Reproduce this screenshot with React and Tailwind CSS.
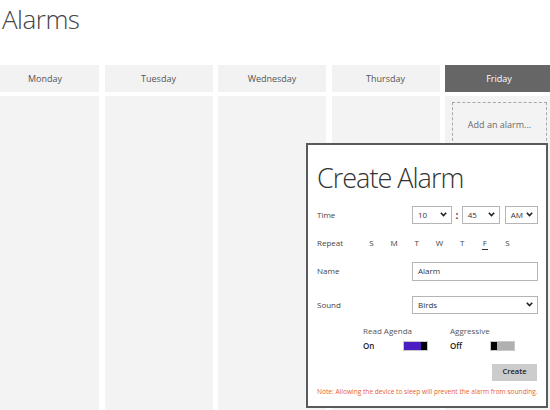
import React from 'react';

const days = ['Monday', 'Tuesday', 'Wednesday', 'Thursday', 'Friday'];
const repeatDays = ['S', 'M', 'T', 'W', 'T', 'F', 'S'];

const Chevron = () => (
  <svg width="7" height="5" viewBox="0 0 7 5" className="shrink-0">
    <polyline points="0.8,0.8 3.5,3.6 6.2,0.8" fill="none" stroke="#222" strokeWidth="1.6" />
  </svg>
);

const Select = ({ value, className }) => (
  <div className={`flex items-center justify-between h-[18px] border border-[#b5b5b5] bg-white pl-[5px] pr-[4px] text-[8px] text-[#333] ${className}`}>
    <span>{value}</span>
    <Chevron />
  </div>
);

const Toggle = ({ on }) => (
  <div className="flex h-[10px] w-[25px] border border-[#c8c8c8]">
    {on ? (
      <>
        <div className="flex-1 bg-[#4a1ec0]" />
        <div className="w-[6px] bg-black" />
      </>
    ) : (
      <>
        <div className="w-[6px] bg-black" />
        <div className="flex-1 bg-[#b0b0b0]" />
      </>
    )}
  </div>
);

const DayColumn = ({ day, active }) => (
  <div className="flex flex-col w-[108px] shrink-0 gap-[4px]">
    <div
      className={`h-[27px] flex items-center justify-center text-[9px] font-medium ${
        active ? 'bg-[#666666] text-white' : 'bg-[#f2f2f2] text-[#555]'
      }`}
    >
      {day}
    </div>
    <div className="flex-1 bg-[#f3f3f3] pl-[7px] pr-[6px] pt-[6px]">
      {active && (
        <div className="h-[80px] border border-dashed border-[#a8a8a8] flex justify-center pt-[15px] text-[9px] text-[#6a6a6a]">
          Add an alarm...
        </div>
      )}
    </div>
  </div>
);

const CreateAlarm = () => (
  <div className="absolute left-[306px] top-[143px] w-[242px] h-[265px] border-2 border-[#5a5a5a] bg-white pl-[9px] pr-[8px] text-[#444]">
    <div className="mt-[13px] text-[27px] leading-normal font-light tracking-[-1px] text-[#333]">Create Alarm</div>

    <div className="mt-[7px] flex items-center h-[18px]">
      <div className="w-[95px] shrink-0 text-[8px]">Time</div>
      <Select value="10" className="w-[41px]" />
      <span className="w-[10px] text-center text-[10px] font-bold leading-none">:</span>
      <Select value="45" className="w-[39px]" />
      <Select value="AM" className="w-[34px] ml-[5px]" />
    </div>

    <div className="mt-[10px] flex items-center h-[18px]">
      <div className="w-[43px] shrink-0 text-[8px]">Repeat</div>
      <div className="flex">
        {repeatDays.map((d, i) => (
          <div key={i} className="w-[22.7px] flex flex-col items-center text-[8px] relative">
            {d}
            {i === 5 && <div className="absolute top-[12px] w-[6px] h-px bg-[#333]" />}
          </div>
        ))}
      </div>
    </div>

    <div className="mt-[10px] flex items-center h-[19px]">
      <div className="w-[95px] shrink-0 text-[8px]">Name</div>
      <div className="w-[127px] h-[19px] border border-[#b5b5b5] flex items-center pl-[5px] text-[8px] text-[#333]">
        Alarm
      </div>
    </div>

    <div className="mt-[15px] flex items-center h-[18px]">
      <div className="w-[95px] shrink-0 text-[8px]">Sound</div>
      <Select value="Birds" className="w-[127px]" />
    </div>

    <div className="mt-[12px] flex pl-[46px] text-[8px]">
      <div className="w-[87px]">
        <div className="h-[10px] leading-[10px] text-[#555]">Read Agenda</div>
        <div className="mt-[5px] flex items-center h-[10px]">
          <span className="w-[40px] font-semibold text-[#222]">On</span>
          <Toggle on />
        </div>
      </div>
      <div>
        <div className="h-[10px] leading-[10px] text-[#555]">Aggressive</div>
        <div className="mt-[5px] flex items-center h-[10px]">
          <span className="w-[40px] font-semibold text-[#222]">Off</span>
          <Toggle />
        </div>
      </div>
    </div>

    <div className="mt-[13px] flex justify-end pr-[1px]">
      <div className="w-[45px] h-[17px] bg-[#cccccc] flex items-center justify-center text-[7.5px] font-semibold text-[#222]">
        Create
      </div>
    </div>

    <div className="mt-[6px] text-[6.6px] text-[#e9602f] whitespace-nowrap">
      Note: Allowing the device to sleep will prevent the alarm from sounding.
    </div>
  </div>
);

export default function App() {
  return (
    <div className="relative w-[550px] h-[410px] overflow-hidden bg-white font-['Open_Sans',sans-serif]">
      <div className="h-[65px] pl-[2px]">
        <h1 className="text-[26px] leading-normal font-light tracking-[-0.5px] text-[#444]">Alarms</h1>
      </div>
      <div className="flex gap-[5.5px] ml-[-9px] h-[345px]">
        {days.map((d) => (
          <DayColumn key={d} day={d} active={d === 'Friday'} />
        ))}
      </div>
      <CreateAlarm />
    </div>
  );
}
